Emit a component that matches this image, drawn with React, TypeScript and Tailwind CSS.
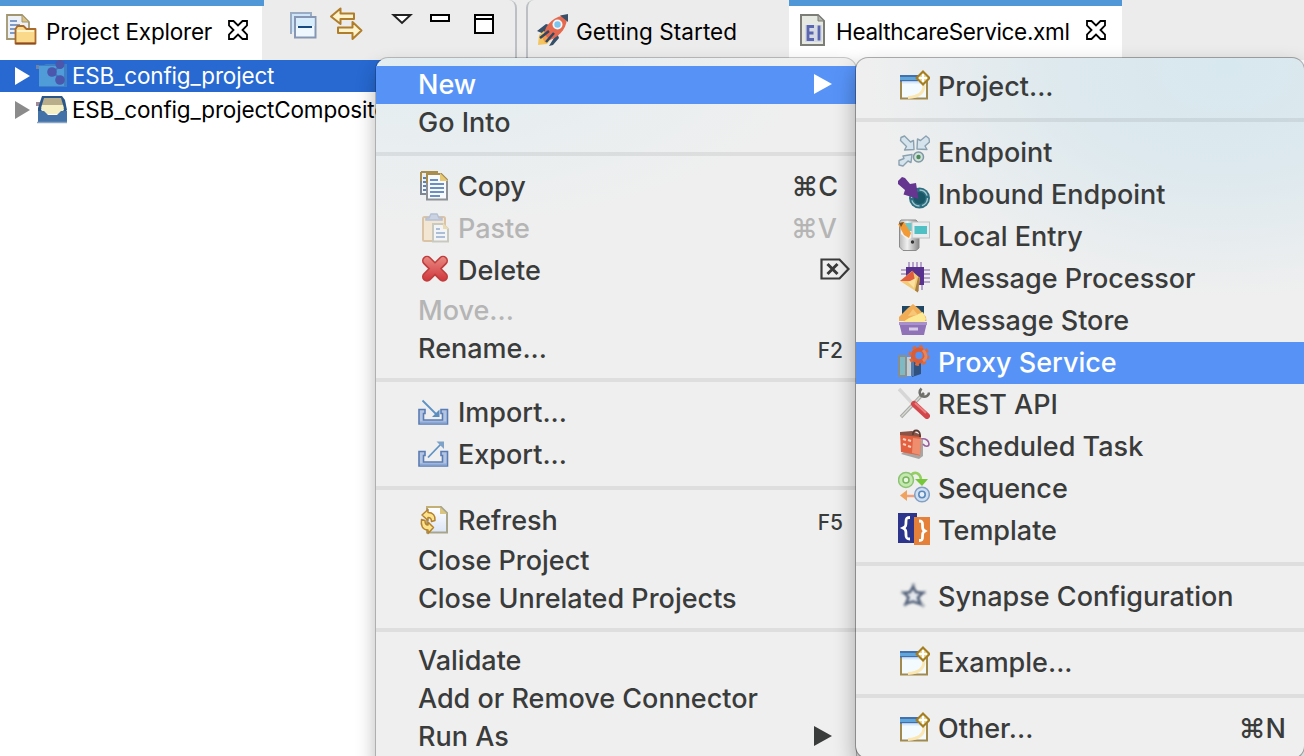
import React from 'react';

type IconProps = { children: React.ReactNode; className?: string };

function Glyph({ children, className = '' }: IconProps) {
  return (
    <svg viewBox="0 0 32 32" className={`h-8 w-8 shrink-0 ${className}`} fill="none">
      {children}
    </svg>
  );
}

const NewWizardIcon = () => (
  <Glyph>
    <rect x="3" y="8" width="26" height="21.5" fill="#f4fbfe" stroke="#a08a50" strokeWidth="2" />
    <path d="M2 6h18v6H2z" fill="#5fa6da" />
    <path d="M2 6h18v2H2z" fill="#4470ae" />
    <path d="M2 11h18v1.5H2z" fill="#3f6fb0" />
    <path d="M4 12.5h20v2H4z" fill="#d9e8f8" />
    <path d="M26 16c0 8-6 12-16 12.500" stroke="#fbe7b4" strokeWidth="3" />
    <path d="M25 2.500l6.500 6.500-6.500 6.500-6.500-6.500z" fill="#ecd694" stroke="#a47e24" strokeWidth="2" />
    <path d="M25 5v8M21 9h8" stroke="#fff" strokeWidth="2" />
  </Glyph>
);

const CopyIcon = () => (
  <Glyph>
    <path d="M3 3h16v4M3 3v22h6" stroke="#a98d4c" strokeWidth="2" fill="#f4f7fb" />
    <path d="M3 12v13h6" stroke="#7d8794" strokeWidth="2" />
    <path d="M5 9h3M5 13h3M5 17h3M5 21h3" stroke="#5d82b4" strokeWidth="2" />
    <path d="M9 5h14l6 6v19.500H9z" fill="#f6f9fd" stroke="#8e9196" strokeWidth="2" />
    <path d="M9 14V5h14l6 6" stroke="#a98d4c" strokeWidth="2" />
    <path d="M22 4v8h8z" fill="#e7c873" />
    <path d="M12 11h8M12 15h14M12 19h14M12 23h14M12 27h10" stroke="#6c8fc0" strokeWidth="2" />
  </Glyph>
);

const PasteIcon = () => (
  <Glyph className="opacity-50">
    <rect x="5" y="6" width="22" height="24" rx="1.500" fill="#f7dfb8" stroke="#c79a5e" strokeWidth="2" />
    <path d="M8 9V7h3l2-4h6l2 4h3v2z" fill="#a9b9d8" stroke="#7f93bb" strokeWidth="1.500" />
    <path d="M15 13h10l5 5v12.500H15z" fill="#f6f9fd" stroke="#a5a593" strokeWidth="2" />
    <path d="M25 12v6h6z" fill="#e7c873" />
    <path d="M18 18h4M18 22h9M18 26h9" stroke="#6c8fc0" strokeWidth="2" />
  </Glyph>
);

const DeleteIcon = () => (
  <Glyph>
    <defs>
      <linearGradient id="del" gradientUnits="userSpaceOnUse" x1="0" y1="3" x2="0" y2="29">
        <stop offset="0" stopColor="#e98c84" />
        <stop offset="1" stopColor="#cf3238" />
      </linearGradient>
    </defs>
    <path d="M9 7.700l16 16M25 7.700l-16 16" stroke="#bf3d3c" strokeWidth="10" strokeLinecap="round" />
    <path d="M9 7.700l16 16M25 7.700l-16 16" stroke="url(#del)" strokeWidth="6.800" strokeLinecap="round" />
  </Glyph>
);

const Tray = () => (
  <>
    <path
      d="M1 14.500h6v4H5.500v6.500h19v-6.500H23v-4h6.500v14.500H1z"
      fill="#b4c5e2"
      stroke="#5a7cb4"
      strokeWidth="1.600"
    />
    <path d="M2 27.500h27" stroke="#8ea8d4" strokeWidth="2" />
  </>
);

const ImportIcon = () => (
  <Glyph>
    <Tray />
    <path d="M4.500 5.500L18 19" stroke="#5f92c4" strokeWidth="1.800" />
    <path d="M21.500 14.500V22H14z" fill="#5c8dbf" />
  </Glyph>
);

const ExportIcon = () => (
  <Glyph>
    <Tray />
    <path d="M10 20.500L23 7" stroke="#5f92c4" strokeWidth="1.800" />
    <path d="M18.500 4.500H26V12z" fill="#7fa3c8" />
  </Glyph>
);

const RefreshIcon = () => (
  <Glyph>
    <defs>
      <linearGradient id="rp" x1="0" y1="0" x2="0" y2="1">
        <stop offset="0" stopColor="#fff" />
        <stop offset="1" stopColor="#dbe5f6" />
      </linearGradient>
    </defs>
    <path d="M9 4h14l6 6v19.500H9z" fill="url(#rp)" stroke="#a7a58c" strokeWidth="2" />
    <path d="M8 4h14" stroke="#c4b074" strokeWidth="2" />
    <path d="M22 4v7h7z" fill="#d9c480" />
    <path
      d="M4 12l6-5.500v3c5 0 7.500 3 7 8l-3.500 1c0-3-1-4-3.500-4v3z"
      fill="#fbe38e"
      stroke="#b5812c"
      strokeWidth="1.500"
      strokeLinejoin="round"
    />
    <path
      d="M3.500 16.500l3.500 1c0 3 .500 4.500 3 4.500v-3l5.500 5.500-5.500 6v-3.500C4.500 27 2.500 22.500 3.500 16.500z"
      fill="#fbe38e"
      stroke="#b5812c"
      strokeWidth="1.500"
      strokeLinejoin="round"
    />
  </Glyph>
);

const EndpointIcon = () => (
  <Glyph>
    <g fill="#d5e4ec" stroke="#8ba1b0" strokeWidth="1.400" strokeLinejoin="round">
      <path d="M3 2.500L6.500 1l6 6 3-1.500.5 9-9.500.5 2-3.500-6-6z" />
      <path d="M31 3.500L28 1l-5.500 4.500-3-1.500-.5 10 10 .5-2-3.500 4.500-4z" />
      <path d="M1 30v-4.500l5-2-1-2.500 9-1.500-1 8-3-1.500-5 5z" />
    </g>
    <circle cx="20.500" cy="22" r="5" fill="#cfe1d8" stroke="#7f98a5" strokeWidth="1.500" />
    <circle cx="20.500" cy="22" r="2.200" fill="#4d8b5c" />
  </Glyph>
);

const InboundIcon = () => (
  <Glyph>
    <circle cx="21.500" cy="21" r="10.500" fill="#2d6f80" />
    <circle cx="21.500" cy="21" r="8" stroke="#a4c6cd" strokeWidth="1.300" strokeDasharray="10 2.500" />
    <circle cx="21.500" cy="21" r="6" fill="#185867" />
    <path d="M0 4l4-4 3 1 5 6 6-1 2.500 16L5.500 17.500 7 13 0 7z" fill="#65358f" />
  </Glyph>
);

const LocalEntryIcon = () => (
  <Glyph>
    <defs>
      <linearGradient id="le" x1="0" y1="0" x2="1" y2="0">
        <stop offset="0" stopColor="#b9b9b9" />
        <stop offset="0.400" stopColor="#f0f0f0" />
        <stop offset="1" stopColor="#888" />
      </linearGradient>
    </defs>
    <path d="M3 1h15l3 3v25l-3 2.500H5L1.500 28V3z" fill="url(#le)" stroke="#8b8b8b" />
    <path d="M3 4h13l2 12-8 5-7-6z" fill="#f2f2f2" />
    <path d="M7 4h9v8H9z" fill="#67c9c9" />
    <path d="M0 5l6-2 7 11-2 5-5-3z" fill="#f29a35" />
    <path d="M1 4l5-1-3 5z" fill="#79501f" />
    <rect x="14" y="3" width="17.500" height="16" fill="#e9eded" stroke="#bfc3c3" />
    <rect x="16.500" y="7" width="12.500" height="8" fill="#4fc0c4" />
    <circle cx="14.500" cy="23" r="1.700" fill="#333" />
  </Glyph>
);

const ProcessorIcon = () => (
  <Glyph>
    <path
      d="M11 1v5M15 1v5M19 1v5M23 1v5M26 9h6M26 13h6M26 17h6M26 21h6M20 24v6M24 24v5M3 9h6M3 13h5"
      stroke="#a890c4"
      strokeWidth="1.600"
    />
    <rect x="8" y="6" width="18" height="18" fill="#57318d" />
    <path d="M14 10l8 7-2 14.500L2 20z" fill="#f3ca78" />
    <path d="M15 9.500l2 10.500L2 20z" fill="#e15d3f" />
    <path d="M22 16l-2 15.500-3-2 3-13z" fill="#a9803f" />
    <path d="M10 21l8-4-2 10z" fill="#fbe2a0" />
  </Glyph>
);

const StoreIcon = () => (
  <Glyph>
    <path d="M4 3h22v14H4z" fill="#1f4663" />
    <path d="M1 14l9-9 5-4 6 5 7 8 .500 4H1z" fill="#f0ad55" />
    <path d="M11 15l14-6 3 7-2 3H5z" fill="#fde893" />
    <path d="M10 13l5-7 5 6z" fill="#f7c777" />
    <path d="M1 19h28l-3 13H4z" fill="#9072b8" />
    <path d="M1 19h28v3H1z" fill="#a891ca" />
    <rect x="11" y="24.500" width="9" height="3" fill="#d7cce6" />
  </Glyph>
);

const ProxyIcon = () => (
  <Glyph>
    <path d="M0 10h9v22H0z" fill="#8a8f8c" />
    <path d="M2 12h5v18H2z" fill="#7fb9c4" />
    <path d="M9 12h5l-1 19H9z" fill="#c2cdd2" />
    <path d="M13 11l10 6v12l-9 3z" fill="#31517f" />
    <path d="M13 12l3 2v17h-3z" fill="#547bab" />
    <circle cx="21" cy="10.500" r="6" stroke="#dc5c33" strokeWidth="4.500" />
    <circle cx="21" cy="10.500" r="9" stroke="#dc6a3d" strokeWidth="3" strokeDasharray="3.600 3.468" />
    <path d="M25 5c4 4 4 8 0 11" stroke="#eb8458" strokeWidth="3" />
  </Glyph>
);

const RestIcon = () => (
  <Glyph>
    <path d="M1 2l14 15" stroke="#d6d6d6" strokeWidth="3.500" />
    <path d="M3 30L24 8" stroke="#a9a9a5" strokeWidth="3.500" />
    <path d="M3.500 29.500L22 10" stroke="#d9d9d6" strokeWidth="1.200" />
    <path d="M23.500 1.500c-3 3-2 7 1.500 8 3 .500 6-1 6-4M23 9l3-3" stroke="#6f706c" strokeWidth="2.600" />
    <path d="M16 17l13 12" stroke="#d2474c" strokeWidth="6" strokeLinecap="round" />
    <path d="M17 16l11 10" stroke="#ec8080" strokeWidth="2" />
  </Glyph>
);

const TaskIcon = () => (
  <Glyph>
    <path d="M3 25l18 5 4-3V10z" fill="#a9a5a2" />
    <path d="M2 4l21 3-1 19.500L3 23z" fill="#e2603f" />
    <path d="M2 3l12-1 9 4v2L2 6z" fill="#8b5346" />
    <path d="M15 9l8 1-1 16-8-2z" fill="#ef8d6f" />
    <path d="M5 10l3 1M10 11l3 1M5 15l3 1M10 17l3 1" stroke="#fbd0bf" strokeWidth="2" />
    <path d="M15 6c-1-6 7-6 7 0v2" stroke="#5d3b33" strokeWidth="1.800" />
    <path d="M23 10c5-1 8 2 8 5s-4 3-6 0" stroke="#9a5e9c" strokeWidth="1.600" />
  </Glyph>
);

const SequenceIcon = () => (
  <Glyph>
    <path d="M13 4c4-4 9-2 10 4" stroke="#95cf62" strokeWidth="2.500" />
    <path d="M17 8h13l-6 7z" fill="#76c83a" />
    <circle cx="8" cy="9" r="7.500" fill="#c5e8b1" stroke="#8cc474" strokeWidth="1.500" />
    <circle cx="8" cy="9" r="3" fill="#e9f7e0" stroke="#79b55e" strokeWidth="1.500" />
    <path d="M17 25H8" stroke="#f0a07c" strokeWidth="2.500" />
    <path d="M2 24.500l7-5.500v11z" fill="#f0a35c" />
    <circle cx="24" cy="23.500" r="7.300" fill="#cfdff0" stroke="#829fc4" strokeWidth="1.500" />
    <circle cx="24" cy="23.500" r="3.200" fill="#e6eff8" stroke="#5b88bd" strokeWidth="1.600" />
  </Glyph>
);

const TemplateIcon = () => (
  <Glyph>
    <path d="M0 0h19v30H0z" fill="#2c348c" />
    <path d="M16 4h16v28H16z" fill="#e5803a" />
    <path d="M12 4.500c-3.500 0-4 1-4 4 0 4 0 5-3 6.500 3 1.500 3 3 3 7 0 3 .500 4 4 4" stroke="#fff" strokeWidth="2.800" />
    <path d="M21 8c3.200 0 3.500 1 3.500 3.500 0 4 0 5 2.500 6.500-2.500 1.500-2.500 2.500-2.500 6 0 3-.500 3.500-3.500 3.500" stroke="#fff" strokeWidth="2.800" />
  </Glyph>
);

const SynapseIcon = () => (
  <Glyph className="blur-[0.9px]">
    <path
      d="M15.500 4v7M3 13l8 2M28 13l-8 2M6 27l6-6M26 28l-6-8"
      stroke="#9aa2ae"
      strokeWidth="3.500"
      opacity="0.700"
    />
    <path d="M15 8l3 5 6.500 1-4.500 4.500 2 6.500-7-2.500-7 2 2.500-6L6.500 14l5.500-1z" stroke="#55637b" strokeWidth="2.600" fill="#e4e8ed" />
  </Glyph>
);

const PackageExplorerIcon = () => (
  <Glyph>
    <path d="M1 1h15l7 7v17H1z" fill="#edf1f6" stroke="#a29670" strokeWidth="1.800" />
    <path d="M16 1v7h7z" fill="#dcc383" stroke="#a29670" />
    <path d="M4 7h7M4 11h10M4 15h6M4 19h5" stroke="#7f9cc8" strokeWidth="1.800" />
    <path d="M9.500 29.500V15l2-3h6l3 3h9v14.500z" fill="#fbd98a" stroke="#a96a2b" strokeWidth="1.800" strokeLinejoin="round" />
    <path d="M11 17h17" stroke="#fff3c7" strokeWidth="2" />
    <path d="M9.500 29.500h20" stroke="#8f4a1d" strokeWidth="1.800" />
  </Glyph>
);

const ProjectTreeIcon = () => (
  <Glyph>
    <path d="M0 5h8l2-1h21v23H3V9H0z" fill="#3f7fc4" />
    <path d="M3 6h25v20H3z" fill="#4f9cd8" />
    <path d="M0 5h3v4H0z" fill="#6f83a8" />
    <path d="M25 5l-8 7 8 8" stroke="#4277bd" strokeWidth="1.800" />
    <g fill="#4a57ad">
      <circle cx="24" cy="4.500" r="4.500" />
      <circle cx="16" cy="12" r="4.800" />
      <circle cx="24" cy="20" r="4.800" />
    </g>
  </Glyph>
);

const CompositeTreeIcon = () => (
  <Glyph>
    <path d="M0 8h4v4H0z" fill="#a08a96" />
    <path d="M6 2h20l3 4 2 10-3 3H2V14z" fill="#2a5688" />
    <path d="M8 4h17l3 10H5z" fill="#b9ae8b" />
    <path d="M6 11h21l1 5-5 4H10l-5-4z" fill="#f5efc5" />
    <path d="M2 17h6l4 4h9l4-4h6v12H2z" fill="#4272a8" />
    <path d="M1 28.500h30" stroke="#8aa4c4" strokeWidth="1.500" />
  </Glyph>
);

const CollapseAllIcon = () => (
  <svg viewBox="0 0 28 28" className="h-7 w-7" fill="none">
    <path d="M1 22V1h20v3" stroke="#9aacc4" strokeWidth="2" />
    <path d="M2 2h18v3H5v15H2z" fill="#cfe6f8" />
    <rect x="5" y="5" width="20.500" height="20.500" fill="#eef7fe" stroke="#8796b2" strokeWidth="2" />
    <path d="M6 6h18.500v8H6z" fill="#d8edfc" />
    <path d="M8 15h14" stroke="#15497f" strokeWidth="2" />
  </svg>
);

const LinkEditorIcon = () => (
  <svg viewBox="0 0 34 34" className="h-[34px] w-[34px]" fill="#fdf3cd" stroke="#b07d2b" strokeWidth="2" strokeLinejoin="round">
    <path d="M1 9.500L10.500 1.500v5h13.500v5.500H10.500v5z" />
    <path d="M31.500 23.500L22.500 15v5.500H8V26h14.500v6z" />
  </svg>
);

const RocketIcon = () => (
  <Glyph>
    <path d="M1 17l9-7 7 2-9 8zM21 19l2 5-6 7-4 1z" fill="#37506a" />
    <path d="M2 31l1-10 5-4 8 7-5 6z" fill="#f4c45e" />
    <path d="M6 23l5-5 4 4-6 7z" fill="#f09b4d" />
    <path d="M8 20C10 9 19 2 31 1c1 11-6 21-17 25z" fill="#e5694f" />
    <path d="M24 1.500L32 0v8z" fill="#3b5068" />
    <path d="M4 24l9-7M10 28l8-9" stroke="#2d4862" strokeWidth="2.500" />
    <circle cx="21.500" cy="10.500" r="5" fill="#f2f7f8" />
    <circle cx="21.500" cy="10.500" r="3.200" fill="#7ec5ee" />
  </Glyph>
);

const XmlFileIcon = () => (
  <svg viewBox="0 0 26 32" className="h-8 w-[26px] shrink-0" fill="none">
    <path d="M1 1h17l6 6v24H1z" fill="#e6e8e2" stroke="#7c7d77" strokeWidth="2" />
    <path d="M18 1v6h6z" fill="#b3b4ae" stroke="#7c7d77" />
    <path d="M5 11h17v17H5z" fill="#d4d9e3" />
    <path d="M14 12.500H8v13h6M8 19h5.500M19 11.500v15" stroke="#5a66b0" strokeWidth="2.800" />
  </svg>
);

const CloseIcon = () => (
  <svg viewBox="0 0 22 22" className="h-[22px] w-[22px] shrink-0" fill="#fff" stroke="#000" strokeWidth="1.800">
    <path d="M2 2h4.500L11 6.500 15.500 2H20v4.500L15.500 11l4.500 4.500V20h-4.500L11 15.500 6.500 20H2v-4.500L6.500 11 2 6.500z" />
  </svg>
);

const Arrow = ({ className }: { className: string }) => (
  <svg viewBox="0 0 18 20" className={`shrink-0 ${className}`} preserveAspectRatio="none">
    <path d="M0 0l18 10L0 20z" fill="currentColor" />
  </svg>
);

const ForwardDeleteIcon = () => (
  <svg viewBox="0 0 30 22" className="mb-0.5 h-[22px] w-[30px]" fill="none" stroke="#3b3b3b">
    <path d="M1.500 1.500h18l9 9.500-9 9.500h-18z" strokeWidth="2.200" />
    <path d="M7.500 6l10 10M17.500 6l-10 10" strokeWidth="3" />
  </svg>
);

type Item = {
  label: string;
  icon?: React.ReactNode;
  keys?: React.ReactNode;
  keysClass?: string;
  labelClass?: string;
  disabled?: boolean;
  selected?: boolean;
  arrow?: boolean;
};

const mainMenu: Item[][] = [
  [
    { label: 'New', selected: true, arrow: true },
    { label: 'Go Into' },
  ],
  [
    { label: 'Copy', icon: <CopyIcon />, keys: '⌘C', keysClass: 'pr-[18px]' },
    { label: 'Paste', icon: <PasteIcon />, keys: '⌘V', keysClass: 'pr-[19px]', disabled: true },
    { label: 'Delete', icon: <DeleteIcon />, keys: <ForwardDeleteIcon />, keysClass: 'pr-[6px]' },
    { label: 'Move...', disabled: true },
    { label: 'Rename...', keys: 'F2', keysClass: 'pr-[13px] pt-1 text-[21px]' },
  ],
  [
    { label: 'Import...', icon: <ImportIcon /> },
    { label: 'Export...', icon: <ExportIcon /> },
  ],
  [
    { label: 'Refresh', icon: <RefreshIcon />, keys: 'F5', keysClass: 'pr-[13px] pt-1.5 text-[21px]' },
    { label: 'Close Project' },
    { label: 'Close Unrelated Projects' },
  ],
  [
    { label: 'Validate' },
    { label: 'Add or Remove Connector' },
    { label: 'Run As', arrow: true },
  ],
];

const newMenu: Item[][] = [
  [{ label: 'Project...', icon: <NewWizardIcon /> }],
  [
    { label: 'Endpoint', icon: <EndpointIcon /> },
    { label: 'Inbound Endpoint', icon: <InboundIcon /> },
    { label: 'Local Entry', icon: <LocalEntryIcon /> },
    { label: 'Message Processor', icon: <ProcessorIcon />, labelClass: 'pl-[2px]' },
    { label: 'Message Store', icon: <StoreIcon />, labelClass: '-ml-[2px]' },
    { label: 'Proxy Service', icon: <ProxyIcon />, selected: true },
    { label: 'REST API', icon: <RestIcon /> },
    { label: 'Scheduled Task', icon: <TaskIcon /> },
    { label: 'Sequence', icon: <SequenceIcon /> },
    { label: 'Template', icon: <TemplateIcon /> },
  ],
  [{ label: 'Synapse Configuration', icon: <SynapseIcon /> }],
  [{ label: 'Example...', icon: <NewWizardIcon /> }],
  [{ label: 'Other...', icon: <NewWizardIcon />, keys: '⌘N', keysClass: 'pr-[18px]' }],
];

function MenuRow({ item }: { item: Item }) {
  const height = item.icon ? 'h-[42px] pb-1' : 'h-[38px] pb-0.5';
  const tone = item.selected
    ? 'bg-[#5793f7] text-white'
    : item.disabled
      ? 'text-[#b5b5b5]'
      : 'text-[#3a3b3b]';
  return (
    <div className={`flex items-center pl-[42px] ${height} ${tone}`}>
      {item.icon && <span className="mr-2 flex shrink-0">{item.icon}</span>}
      <span className={`whitespace-nowrap ${item.icon ? 'pt-0.5' : ''} ${item.labelClass ?? ''}`}>{item.label}</span>
      {item.keys && <span className={`ml-auto ${item.icon ? 'pt-0.5' : ''} ${item.keysClass ?? ''}`}>{item.keys}</span>}
      {item.arrow && <Arrow className="mr-6 ml-auto h-5 w-[18px]" />}
    </div>
  );
}

function Menu({ groups, className }: { groups: Item[][]; className: string }) {
  return (
    <div className={`absolute pt-2 pb-2 text-[27px] leading-none font-[450] tracking-[0px] ${className}`}>
      {groups.map((group, i) => (
        <React.Fragment key={i}>
          {i > 0 && <div className="my-2.5 h-1 bg-black/[0.07]" />}
          {group.map((item) => (
            <MenuRow key={item.label} item={item} />
          ))}
        </React.Fragment>
      ))}
    </div>
  );
}

export default function App() {
  return (
    <div className="relative h-[756px] w-[1304px] overflow-hidden bg-white font-[Inter,'Liberation_Sans',sans-serif] text-black">
      <header className="flex h-[60px] bg-[#ececec] text-[22.5px] leading-none">
        <div className="flex w-[517px] shrink-0 rounded-tr-lg border-r-2 border-[#bcc0c4]">
          <div className="flex h-full w-[262px] shrink-0 flex-col bg-white">
            <div className="h-1.5 w-[264px] shrink-0 bg-[#4f97d6]" />
            <div className="flex items-center pt-2 pl-[6px]">
              <PackageExplorerIcon />
              <span className="ml-2 w-[181px] pt-1 tracking-[-0.2px] whitespace-nowrap">Project Explorer</span>
              <CloseIcon />
            </div>
          </div>
          <div className="flex items-start pl-7">
            <div className="pt-3"><CollapseAllIcon /></div>
            <div className="pt-[7px] pl-3"><LinkEditorIcon /></div>
            <svg viewBox="0 0 22 12" className="mt-[13px] ml-[27px] h-3 w-[22px]" fill="#fff" stroke="#222" strokeWidth="2">
              <path d="M2.500 2h17L11 10z" />
            </svg>
            <div className="mt-3.5 ml-[17px] h-2 w-5 border-2 border-black bg-white" />
            <div className="mt-3.5 ml-6 h-5 w-5 border-2 border-black bg-white">
              <div className="mt-0.5 h-0.5 bg-black" />
            </div>
          </div>
        </div>
        <div className="ml-[9px] flex flex-1 rounded-tl-lg border-l-2 border-[#bcc0c4]">
          <div className="flex w-[261px] shrink-0 items-start pt-3.5 pl-2">
            <RocketIcon />
            <span className="pt-[7px] pl-2 tracking-[0.05px] whitespace-nowrap">Getting Started</span>
          </div>
          <div className="flex w-[333px] shrink-0 flex-col border-t-[6px] border-[#4f97d6] bg-white">
            <div className="flex items-center pt-2 pl-[11px]">
              <XmlFileIcon />
              <span className="ml-2.5 w-[249px] pt-1 tracking-[-0.33px] whitespace-nowrap">HealthcareService.xml</span>
              <CloseIcon />
            </div>
          </div>
        </div>
      </header>

      <main className="w-[527px] text-[22.5px] leading-none tracking-[-0.17px]">
        <div className="flex h-8 items-center bg-[#2769d1] pl-[15px] text-white">
          <Arrow className="h-[18px] w-[15px]" />
          <span className="ml-[6px] flex"><ProjectTreeIcon /></span>
          <span className="ml-1 whitespace-nowrap">ESB_config_project</span>
        </div>
        <div className="flex h-9 items-center pl-[15px]">
          <Arrow className="h-[18px] w-[15px] text-[#8b8b8b]" />
          <span className="ml-[6px] flex"><CompositeTreeIcon /></span>
          <span className="ml-1 whitespace-nowrap">ESB_config_projectCompositeApp</span>
        </div>
      </main>

      <Menu
        groups={mainMenu}
        className="top-[58px] left-[376px] w-[480px] rounded-t-xl bg-[#efefef] bg-[radial-gradient(ellipse_380px_170px_at_60px_0px,#e2edf1_0%,#efefef_100%)] shadow-[0_0_0_1px_rgba(0,0,0,0.2),0_10px_20px_rgba(0,0,0,0.3)]"
      />
      <Menu
        groups={newMenu}
        className="top-[58px] left-[856px] w-[448px] rounded-xl bg-[#efefef] bg-[radial-gradient(ellipse_360px_230px_at_370px_10px,#d8e8ef_0%,#dde9ee_45%,#efefef_100%)] shadow-[0_0_0_1px_rgba(0,0,0,0.3),0_10px_22px_rgba(0,0,0,0.33)]"
      />
    </div>
  );
}
